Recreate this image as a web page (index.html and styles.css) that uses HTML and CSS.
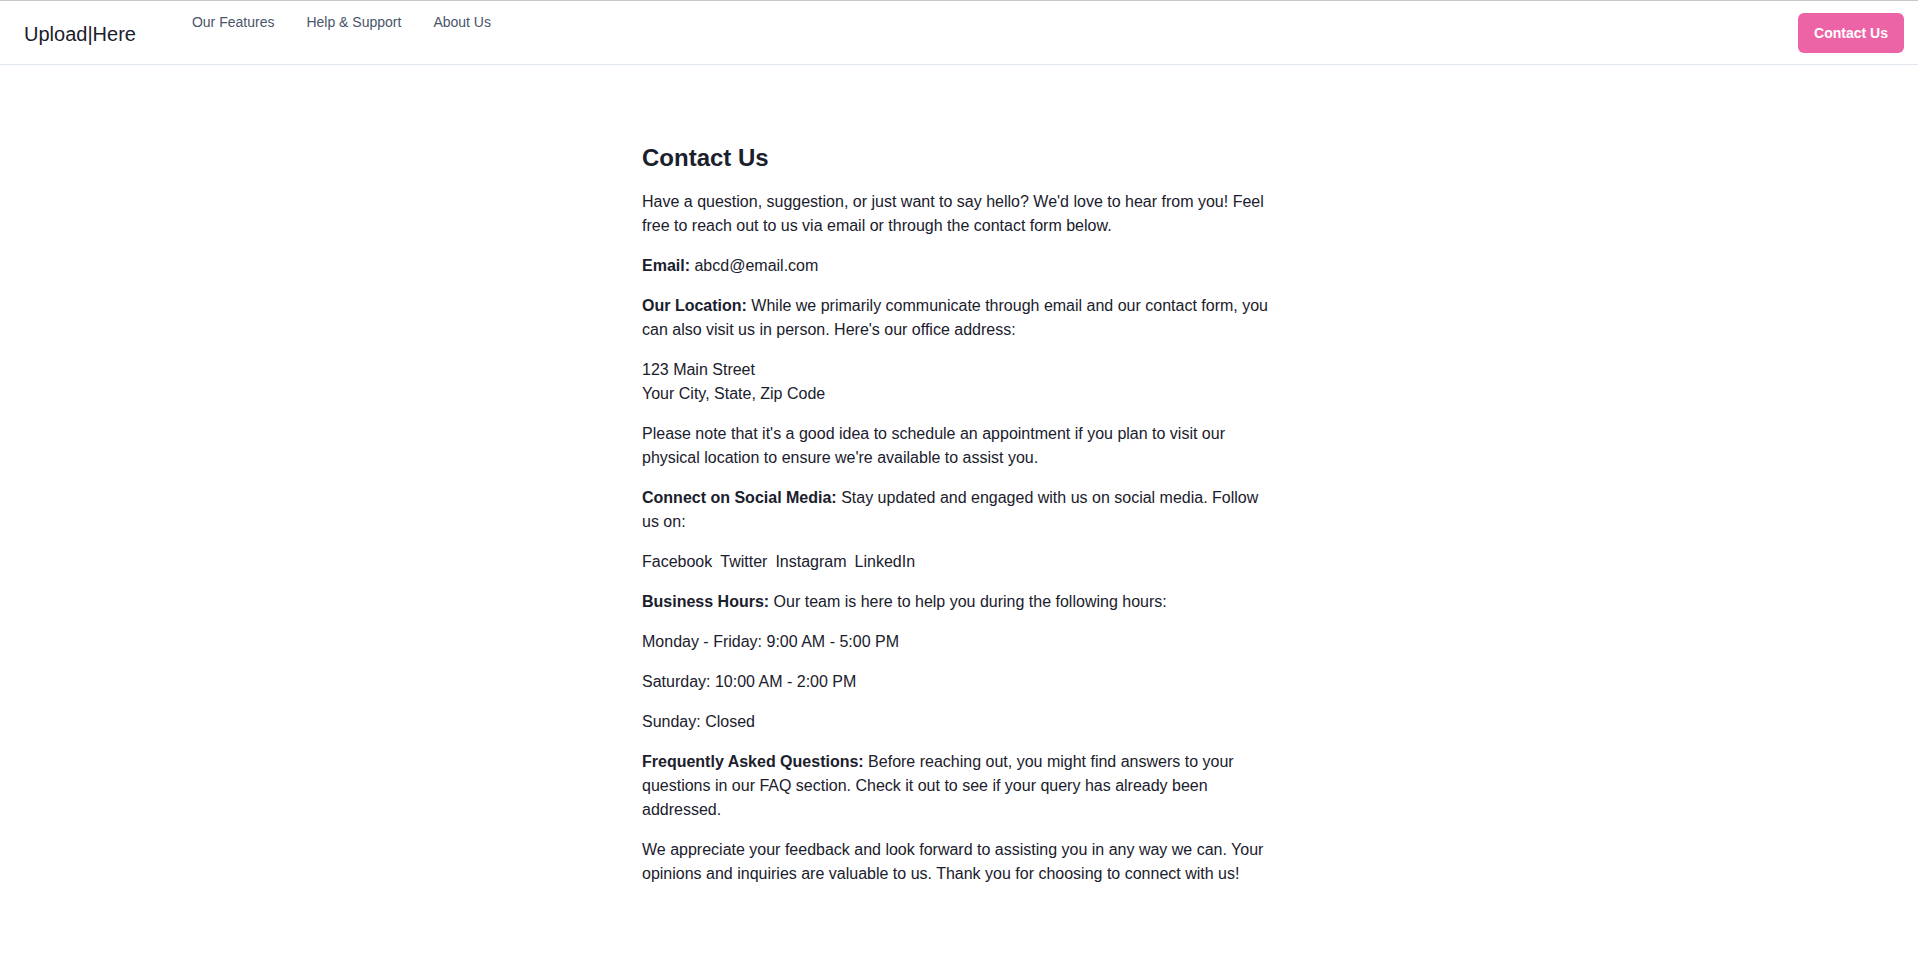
FILE: index.html
```html
<!DOCTYPE html>
<html lang="en">
<head>
<meta charset="utf-8">
<title>Upload|Here - Contact Us</title>
<link rel="stylesheet" href="styles.css">
</head>
<body>
<header class="site-header">
  <div class="brand">Upload|Here</div>
  <nav class="main-nav">
    <a href="#" class="nav-link">Our Features</a>
    <a href="#" class="nav-link">Help &amp; Support</a>
    <a href="#" class="nav-link">About Us</a>
  </nav>
  <a href="#" class="cta-button">Contact Us</a>
</header>
<main class="content">
  <h1 class="title">Contact Us</h1>
  <p>Have a question, suggestion, or just want to say hello? We'd love to hear from you! Feel free to reach out to us via email or through the contact form below.</p>
  <p><strong>Email:</strong> abcd@email.com</p>
  <p><strong>Our Location:</strong> While we primarily communicate through email and our contact form, you can also visit us in person. Here's our office address:</p>
  <p>123 Main Street<br>Your City, State, Zip Code</p>
  <p>Please note that it's a good idea to schedule an appointment if you plan to visit our physical location to ensure we're available to assist you.</p>
  <p><strong>Connect on Social Media:</strong> Stay updated and engaged with us on social media. Follow us on:</p>
  <p class="socials"><a href="#" class="social-link">Facebook</a><a href="#" class="social-link">Twitter</a><a href="#" class="social-link">Instagram</a><a href="#" class="social-link">LinkedIn</a></p>
  <p><strong>Business Hours:</strong> Our team is here to help you during the following hours:</p>
  <p>Monday - Friday: 9:00 AM - 5:00 PM</p>
  <p>Saturday: 10:00 AM - 2:00 PM</p>
  <p>Sunday: Closed</p>
  <p><strong>Frequently Asked Questions:</strong> Before reaching out, you might find answers to your questions in our FAQ section. Check it out to see if your query has already been addressed.</p>
  <p>We appreciate your feedback and look forward to assisting you in any way we can. Your opinions and inquiries are valuable to us. Thank you for choosing to connect with us!</p>
</main>
</body>
</html>
```

FILE: styles.css
```css
* {
  box-sizing: border-box;
}

html, body {
  margin: 0;
  padding: 0;
  background: #ffffff;
}

body {
  font-family: "Liberation Sans", Arial, sans-serif;
  color: #1a202c;
  font-size: 16px;
  line-height: 24px;
}

.site-header {
  display: flex;
  align-items: center;
  height: 65px;
  border-top: 1px solid #c6c6c6;
  border-bottom: 1px solid #e2e8f0;
  padding: 0 14px 0 24px;
}

.brand {
  font-size: 20px;
  line-height: 28px;
  color: #1a202c;
  margin-right: 40px;
  padding-top: 3px;
}

.main-nav {
  display: flex;
  align-self: flex-start;
  padding-top: 11px;
  flex: 1;
}

.nav-link {
  font-size: 14px;
  line-height: 20px;
  color: #4a5568;
  text-decoration: none;
  padding: 0 16px;
}

.cta-button {
  display: block;
  background: #ed64a6;
  color: #ffffff;
  font-weight: bold;
  font-size: 14px;
  line-height: 20px;
  padding: 10px 16px;
  border-radius: 6px;
  text-decoration: none;
  margin-top: 1px;
}

.content {
  max-width: 634px;
  margin: 77px auto 0;
}

.title {
  font-size: 24px;
  line-height: 32px;
  font-weight: bold;
  margin: 0 0 16px;
}

.content p {
  margin: 0 0 16px;
}

.content strong {
  font-weight: bold;
}

.socials {
  display: flex;
  gap: 8px;
}

.social-link {
  color: #1a202c;
  text-decoration: none;
}
```
